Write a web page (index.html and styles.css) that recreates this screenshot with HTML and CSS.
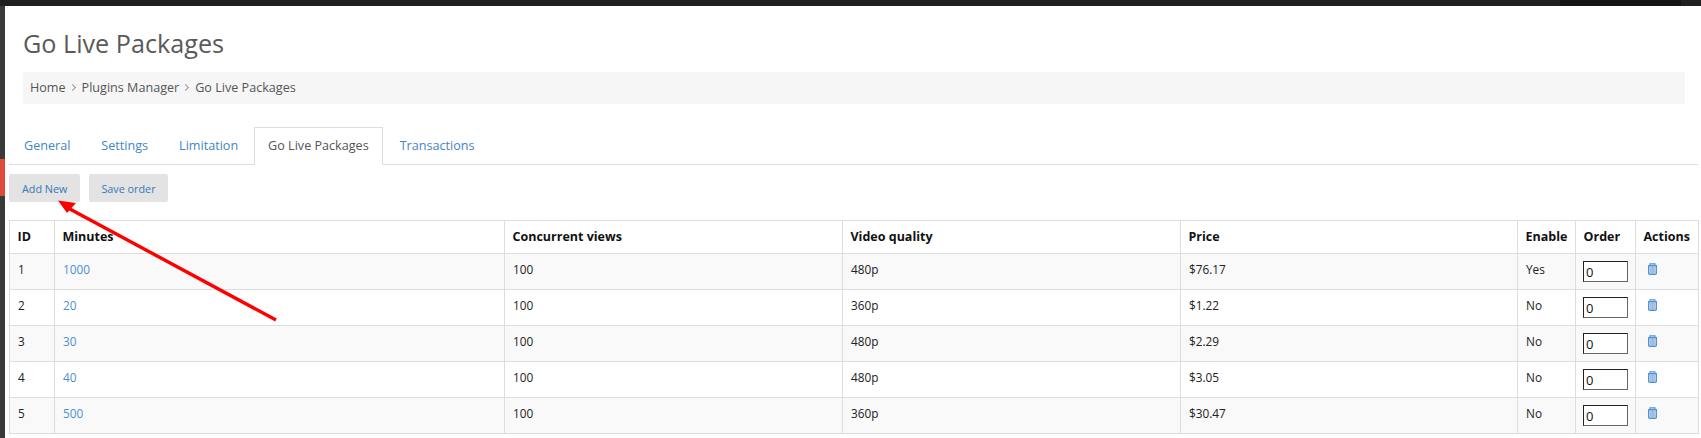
FILE: index.html
```html
<!DOCTYPE html>
<html lang="en">
<head>
<meta charset="utf-8">
<title>Go Live Packages</title>
<link rel="stylesheet" href="styles.css">
</head>
<body>
<div class="topbar"><div class="topbar-dark"></div></div>
<div class="shell">
  <aside class="rail"><div class="rail-mark"></div></aside>
  <main class="content">
    <header class="head">
      <h1>Go Live Packages</h1>
      <nav class="crumbs">
        <a>Home</a><span class="sep"></span><a>Plugins Manager</a><span class="sep"></span><a>Go Live Packages</a>
      </nav>
    </header>
    <ul class="tabs">
      <li><a>General</a></li>
      <li><a>Settings</a></li>
      <li><a>Limitation</a></li>
      <li class="active"><a>Go Live Packages</a></li>
      <li><a>Transactions</a></li>
    </ul>
    <div class="actions">
      <button class="btn">Add New</button>
      <button class="btn">Save order</button>
    </div>
    <table class="grid">
      <colgroup>
        <col class="c-id"><col class="c-min"><col class="c-views"><col class="c-quality"><col class="c-price"><col class="c-enable"><col class="c-order"><col class="c-actions">
      </colgroup>
      <thead>
        <tr><th>ID</th><th>Minutes</th><th>Concurrent views</th><th>Video quality</th><th>Price</th><th>Enable</th><th>Order</th><th>Actions</th></tr>
      </thead>
      <tbody>
        <tr><td>1</td><td><a>1000</a></td><td>100</td><td>480p</td><td>$76.17</td><td>Yes</td><td class="ord"><input value="0"></td><td><svg class="trash" viewBox="0 0 10 12"><use href="#bin"/></svg></td></tr>
        <tr><td>2</td><td><a>20</a></td><td>100</td><td>360p</td><td>$1.22</td><td>No</td><td class="ord"><input value="0"></td><td><svg class="trash" viewBox="0 0 10 12"><use href="#bin"/></svg></td></tr>
        <tr><td>3</td><td><a>30</a></td><td>100</td><td>480p</td><td>$2.29</td><td>No</td><td class="ord"><input value="0"></td><td><svg class="trash" viewBox="0 0 10 12"><use href="#bin"/></svg></td></tr>
        <tr><td>4</td><td><a>40</a></td><td>100</td><td>480p</td><td>$3.05</td><td>No</td><td class="ord"><input value="0"></td><td><svg class="trash" viewBox="0 0 10 12"><use href="#bin"/></svg></td></tr>
        <tr><td>5</td><td><a>500</a></td><td>100</td><td>360p</td><td>$30.47</td><td>No</td><td class="ord"><input value="0"></td><td><svg class="trash" viewBox="0 0 10 12"><use href="#bin"/></svg></td></tr>
      </tbody>
    </table>
  </main>
</div>
<svg class="defs" width="0" height="0">
  <symbol id="bin" viewBox="0 0 10 12">
    <rect x="1.5" y="3" width="7" height="8" fill="#b4cbe6"/>
    <path d="M3.5 3.5v7M5 3.5v7M6.5 3.5v7" stroke="#8fb0d8" stroke-width=".7"/>
    <path d="M2.5 2V.9h5V2M.6 2.6h8.8M1 2.6v7.6q0 1.2 1.2 1.2h5.6q1.2 0 1.2-1.2V2.6" fill="none" stroke="#4f93d8" stroke-width="1.1"/>
  </symbol>
</svg>
<svg class="arrow" viewBox="0 0 1701 438">
  <path d="M276 320 68 208" stroke="#fe0000" stroke-width="3.4" fill="none"/>
  <path d="M58 200.5 76 203 67 213Z" fill="#fe0000"/>
</svg>
</body>
</html>
```
FILE: styles.css
```css
* { box-sizing: border-box; }
html, body { margin: 0; height: 100%; overflow: hidden; }
body { font-family: "Open Sans", sans-serif; font-size: 12px; color: #333; background: #fff; position: relative; }
a { color: #337ab7; text-decoration: none; }

.topbar { height: 6px; background: #1f1f1f; display: flex; justify-content: flex-end; padding-right: 20px; }
.topbar-dark { width: 121px; background: #141414; }

.shell { display: flex; height: 432px; }
.rail { width: 5px; background: #3a3a3a; flex: none; padding-top: 153px; }
.rail-mark { height: 37px; background: #dd4b39; }

.content { flex: 1; padding-left: 4px; padding-right: 3px; min-width: 0; }

.head { padding: 23px 13px 0 14px; }
h1 { margin: 0; font-size: 25.2px; font-weight: 400; line-height: 28px; color: #5a5a5a; }
.crumbs { margin-top: 15px; height: 32px; background: #f6f6f6; padding: 0 7px 2px; display: flex; align-items: center; font-size: 12.6px; color: #555; }
.crumbs a { color: #555; }
.sep { width: 5px; height: 5px; border-top: 1px solid #999; border-right: 1px solid #999; transform: rotate(45deg); margin: 0 7px 0 4px; }

.tabs { list-style: none; margin: 23px 0 0; padding: 0; display: flex; height: 38px; border-bottom: 1px solid #ddd; font-size: 12.6px; }
.tabs li { height: 38px; }
.tabs a { display: block; height: 37px; padding: 10px 15.5px 0; line-height: 18px; color: #3f86c6; }
.tabs li:first-child a { padding-left: 15px; }
.tabs .active { margin-right: 1px; }
.tabs .active a { color: #555; background: #fff; border: 1px solid #ddd; border-bottom: 0; height: 38px; padding: 9px 13.5px 0; }

.actions { margin-top: 9px; display: flex; gap: 9px; }
.btn { height: 28px; padding: 0 12px; border: 0; border-radius: 2px; background: #e3e3e3; color: #337ab7; font: 10.8px "Open Sans", sans-serif; }
.btn:first-child { padding: 0 13px; }

.grid { margin-top: 18px; width: 1689px; border-collapse: collapse; table-layout: fixed; font-size: 11.8px; color: #222; }
.c-id { width: 45px; } .c-min { width: 450px; } .c-views { width: 338px; } .c-quality { width: 338px; }
.c-price { width: 337px; } .c-enable { width: 58px; } .c-order { width: 60px; } .c-actions { width: 63px; }
.grid th, .grid td { border: 1px solid #ddd; padding: 7px 7px 8px 8px; text-align: left; vertical-align: top; line-height: 17px; height: 36px; }
.grid td a { color: #4f8fd0; }
.grid th { color: #111; font-size: 12.5px; font-weight: 700; height: 33px; padding-top: 7px; padding-left: 7.5px; }
.grid tbody tr:nth-child(odd) { background: #f9f9f9; }
.grid td.ord { padding: 7px 0 0 7px; }
.grid input { display: block; width: 45px; height: 21px; padding: 1px 2px; border: 1px solid; border-color: #222 #666 #666 #222; background: #fff; font: 13px "Open Sans", sans-serif; color: #111; }
.trash { width: 11px; height: 12px; margin-left: 3px; display: block; margin-top: 2px; }

.defs { position: absolute; }
.arrow { position: absolute; left: 0; top: 0; width: 1701px; height: 438px; pointer-events: none; }
```
